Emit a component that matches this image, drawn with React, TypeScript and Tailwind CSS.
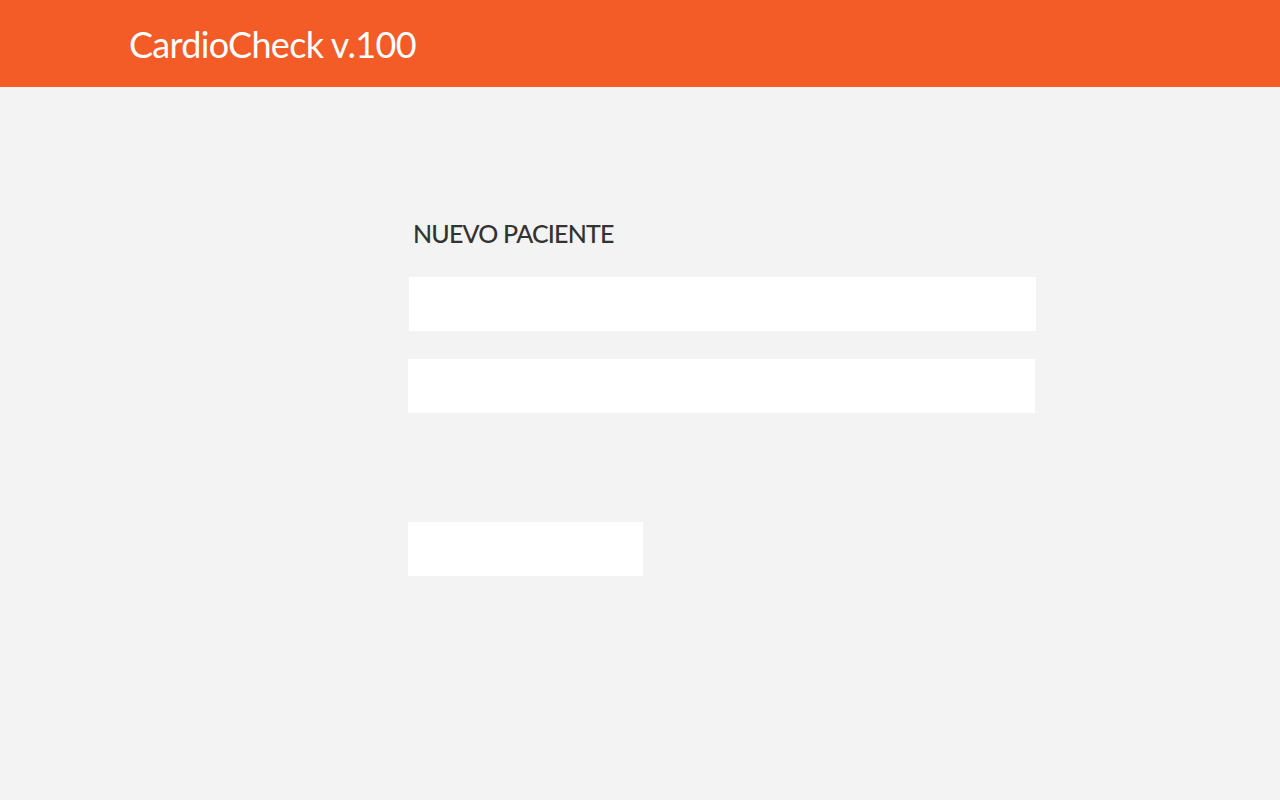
export default function App() {
  return (
    <div className="min-h-[800px] bg-[#f3f3f3] font-['Lato','Noto_Sans',sans-serif]">
      <header className="flex h-[87px] items-center bg-[#f35b27] pl-[129px]">
        <h1 className="text-[36px] font-normal leading-none tracking-[-0.7px] text-white">CardioCheck v.100</h1>
      </header>

      <main className="pl-[408px] pt-[131px]">
        <div className="flex w-[628px] flex-col">
          <h2 className="ml-[5px] text-[25px] font-medium leading-[30px] tracking-[-0.8px] text-[#333333]">NUEVO PACIENTE</h2>
          <input className="ml-px mt-[29px] h-[54px] w-[627px] bg-white px-3 outline-none" />
          <input className="mt-[28px] h-[54px] w-[627px] bg-white px-3 outline-none" />
          <button className="mt-[109px] h-[54px] w-[235px] bg-white" />
        </div>
      </main>
    </div>
  );
}
